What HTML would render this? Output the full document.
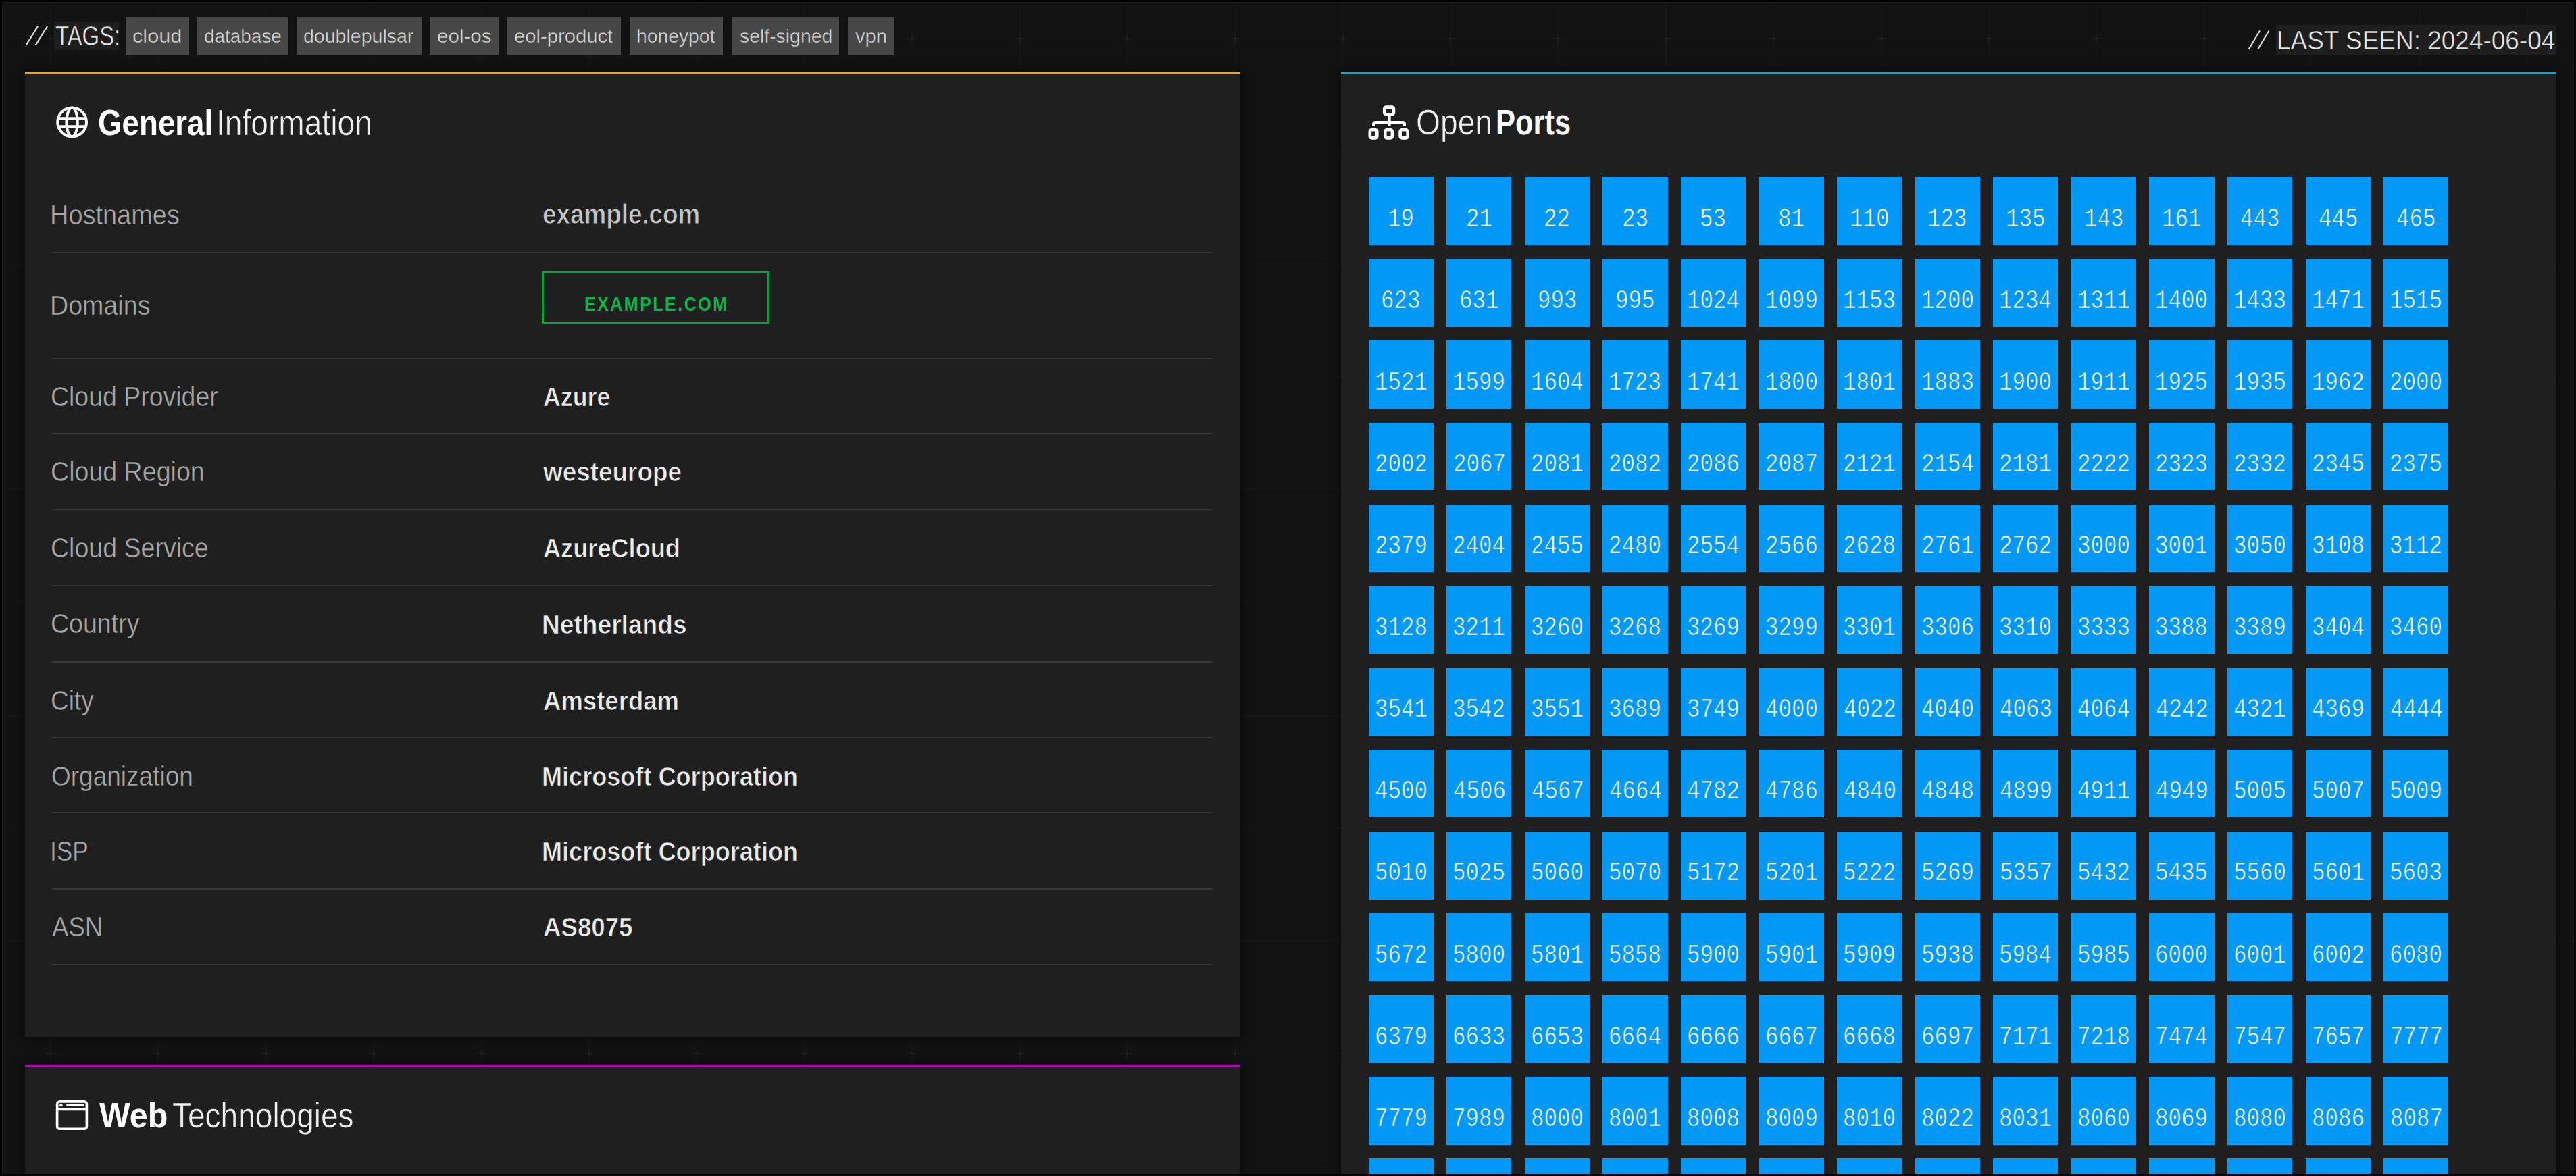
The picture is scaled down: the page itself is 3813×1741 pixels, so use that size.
<!DOCTYPE html>
<html><head><meta charset="utf-8"><style>
html,body{margin:0;padding:0;}
body{width:3813px;height:1741px;overflow:hidden;position:relative;background:#000;font-family:"Liberation Sans",sans-serif;}
#pg{position:absolute;left:3px;top:3px;width:3807px;height:1735px;background:#121212;overflow:hidden;}
#fr{position:absolute;left:3px;top:3px;width:3807px;height:1735px;box-shadow:inset 1px 1px 0 #1b1b1b;pointer-events:none;}
.b{position:absolute;}
.t{position:absolute;white-space:nowrap;transform-origin:0 0;}
</style></head><body><div id="pg"><div style="position:absolute;left:-3px;top:-3px;width:3813px;height:1741px;">
<svg class="b" style="left:0;top:0" width="3813" height="1741" viewBox="0 0 3813 1741">
<defs><pattern id="gp" patternUnits="userSpaceOnUse" x="-4.7" y="-26.5" width="159.4" height="167">
<g stroke="#ffffff" stroke-width="1.2" fill="none">
<line x1="79.7" y1="0" x2="79.7" y2="167" stroke-opacity="0.016"/>
<line x1="0" y1="83.5" x2="159.4" y2="83.5" stroke-opacity="0.016"/>
<line x1="73.7" y1="83.5" x2="85.7" y2="83.5" stroke-opacity="0.05"/>
<line x1="79.7" y1="77.5" x2="79.7" y2="89.5" stroke-opacity="0.05"/>
</g></pattern></defs>
<rect width="3813" height="1741" fill="url(#gp)"/></svg>
<div class="b" style="left:37.00px;top:107.00px;width:1798.00px;height:1427.50px;background:#1f1f1f;box-shadow:0 0 12px 2px rgba(0,0,0,.5);"></div>
<div class="b" style="left:37.00px;top:107.00px;width:1798.00px;height:3.00px;background:#ff9f00;"></div>
<div class="b" style="left:1985.00px;top:107.00px;width:1798.50px;height:1634.00px;background:#1f1f1f;box-shadow:0 0 12px 2px rgba(0,0,0,.5);"></div>
<div class="b" style="left:1985.00px;top:107.00px;width:1798.50px;height:3.00px;background:#00a8e0;"></div>
<div class="b" style="left:37.00px;top:1576.00px;width:1798.00px;height:165.00px;background:#1f1f1f;box-shadow:0 0 12px 2px rgba(0,0,0,.5);"></div>
<div class="b" style="left:37.00px;top:1576.00px;width:1798.00px;height:3.00px;background:#c000c0;"></div>
<div class="b" style="left:80.30px;top:31.60px;width:95.90px;height:42.60px;background:#1e1e1e;"></div>
<div class="b" style="left:185.50px;top:25.30px;width:94.10px;height:55.70px;background:#474747;"></div>
<div class="b" style="left:291.60px;top:25.30px;width:135.80px;height:55.70px;background:#474747;"></div>
<div class="b" style="left:438.90px;top:25.30px;width:185.30px;height:55.70px;background:#474747;"></div>
<div class="b" style="left:636.30px;top:25.30px;width:101.90px;height:55.70px;background:#474747;"></div>
<div class="b" style="left:750.60px;top:25.30px;width:168.70px;height:55.70px;background:#474747;"></div>
<div class="b" style="left:931.70px;top:25.30px;width:138.80px;height:55.70px;background:#474747;"></div>
<div class="b" style="left:1083.00px;top:25.30px;width:159.20px;height:55.70px;background:#474747;"></div>
<div class="b" style="left:1254.70px;top:25.30px;width:68.90px;height:55.70px;background:#474747;"></div>
<div class="b" style="left:3368.70px;top:37.10px;width:413.90px;height:43.70px;background:#1e1e1e;"></div>
<div class="b" style="left:76.50px;top:373.00px;width:1718.50px;height:2.00px;background:#363636;"></div>
<div class="b" style="left:76.50px;top:530.00px;width:1718.50px;height:2.00px;background:#363636;"></div>
<div class="b" style="left:76.50px;top:640.60px;width:1718.50px;height:2.00px;background:#363636;"></div>
<div class="b" style="left:76.50px;top:753.30px;width:1718.50px;height:2.00px;background:#363636;"></div>
<div class="b" style="left:76.50px;top:866.00px;width:1718.50px;height:2.00px;background:#363636;"></div>
<div class="b" style="left:76.50px;top:978.70px;width:1718.50px;height:2.00px;background:#363636;"></div>
<div class="b" style="left:76.50px;top:1091.30px;width:1718.50px;height:2.00px;background:#363636;"></div>
<div class="b" style="left:76.50px;top:1201.70px;width:1718.50px;height:2.00px;background:#363636;"></div>
<div class="b" style="left:76.50px;top:1314.70px;width:1718.50px;height:2.00px;background:#363636;"></div>
<div class="b" style="left:76.50px;top:1427.30px;width:1718.50px;height:2.00px;background:#363636;"></div>
<div class="b" style="left:801.70px;top:400.50px;width:337.30px;height:79.90px;border:3px solid #04a23e;box-sizing:border-box;"></div>
<div class="b" style="left:2025.70px;top:262.20px;width:96.20px;height:100.60px;background:#0299f6;"></div>
<div class="b" style="left:2141.27px;top:262.20px;width:96.20px;height:100.60px;background:#0299f6;"></div>
<div class="b" style="left:2256.84px;top:262.20px;width:96.20px;height:100.60px;background:#0299f6;"></div>
<div class="b" style="left:2372.41px;top:262.20px;width:96.20px;height:100.60px;background:#0299f6;"></div>
<div class="b" style="left:2487.98px;top:262.20px;width:96.20px;height:100.60px;background:#0299f6;"></div>
<div class="b" style="left:2603.55px;top:262.20px;width:96.20px;height:100.60px;background:#0299f6;"></div>
<div class="b" style="left:2719.12px;top:262.20px;width:96.20px;height:100.60px;background:#0299f6;"></div>
<div class="b" style="left:2834.69px;top:262.20px;width:96.20px;height:100.60px;background:#0299f6;"></div>
<div class="b" style="left:2950.26px;top:262.20px;width:96.20px;height:100.60px;background:#0299f6;"></div>
<div class="b" style="left:3065.83px;top:262.20px;width:96.20px;height:100.60px;background:#0299f6;"></div>
<div class="b" style="left:3181.40px;top:262.20px;width:96.20px;height:100.60px;background:#0299f6;"></div>
<div class="b" style="left:3296.97px;top:262.20px;width:96.20px;height:100.60px;background:#0299f6;"></div>
<div class="b" style="left:3412.54px;top:262.20px;width:96.20px;height:100.60px;background:#0299f6;"></div>
<div class="b" style="left:3528.11px;top:262.20px;width:96.20px;height:100.60px;background:#0299f6;"></div>
<div class="b" style="left:2025.70px;top:383.30px;width:96.20px;height:100.60px;background:#0299f6;"></div>
<div class="b" style="left:2141.27px;top:383.30px;width:96.20px;height:100.60px;background:#0299f6;"></div>
<div class="b" style="left:2256.84px;top:383.30px;width:96.20px;height:100.60px;background:#0299f6;"></div>
<div class="b" style="left:2372.41px;top:383.30px;width:96.20px;height:100.60px;background:#0299f6;"></div>
<div class="b" style="left:2487.98px;top:383.30px;width:96.20px;height:100.60px;background:#0299f6;"></div>
<div class="b" style="left:2603.55px;top:383.30px;width:96.20px;height:100.60px;background:#0299f6;"></div>
<div class="b" style="left:2719.12px;top:383.30px;width:96.20px;height:100.60px;background:#0299f6;"></div>
<div class="b" style="left:2834.69px;top:383.30px;width:96.20px;height:100.60px;background:#0299f6;"></div>
<div class="b" style="left:2950.26px;top:383.30px;width:96.20px;height:100.60px;background:#0299f6;"></div>
<div class="b" style="left:3065.83px;top:383.30px;width:96.20px;height:100.60px;background:#0299f6;"></div>
<div class="b" style="left:3181.40px;top:383.30px;width:96.20px;height:100.60px;background:#0299f6;"></div>
<div class="b" style="left:3296.97px;top:383.30px;width:96.20px;height:100.60px;background:#0299f6;"></div>
<div class="b" style="left:3412.54px;top:383.30px;width:96.20px;height:100.60px;background:#0299f6;"></div>
<div class="b" style="left:3528.11px;top:383.30px;width:96.20px;height:100.60px;background:#0299f6;"></div>
<div class="b" style="left:2025.70px;top:504.40px;width:96.20px;height:100.60px;background:#0299f6;"></div>
<div class="b" style="left:2141.27px;top:504.40px;width:96.20px;height:100.60px;background:#0299f6;"></div>
<div class="b" style="left:2256.84px;top:504.40px;width:96.20px;height:100.60px;background:#0299f6;"></div>
<div class="b" style="left:2372.41px;top:504.40px;width:96.20px;height:100.60px;background:#0299f6;"></div>
<div class="b" style="left:2487.98px;top:504.40px;width:96.20px;height:100.60px;background:#0299f6;"></div>
<div class="b" style="left:2603.55px;top:504.40px;width:96.20px;height:100.60px;background:#0299f6;"></div>
<div class="b" style="left:2719.12px;top:504.40px;width:96.20px;height:100.60px;background:#0299f6;"></div>
<div class="b" style="left:2834.69px;top:504.40px;width:96.20px;height:100.60px;background:#0299f6;"></div>
<div class="b" style="left:2950.26px;top:504.40px;width:96.20px;height:100.60px;background:#0299f6;"></div>
<div class="b" style="left:3065.83px;top:504.40px;width:96.20px;height:100.60px;background:#0299f6;"></div>
<div class="b" style="left:3181.40px;top:504.40px;width:96.20px;height:100.60px;background:#0299f6;"></div>
<div class="b" style="left:3296.97px;top:504.40px;width:96.20px;height:100.60px;background:#0299f6;"></div>
<div class="b" style="left:3412.54px;top:504.40px;width:96.20px;height:100.60px;background:#0299f6;"></div>
<div class="b" style="left:3528.11px;top:504.40px;width:96.20px;height:100.60px;background:#0299f6;"></div>
<div class="b" style="left:2025.70px;top:625.50px;width:96.20px;height:100.60px;background:#0299f6;"></div>
<div class="b" style="left:2141.27px;top:625.50px;width:96.20px;height:100.60px;background:#0299f6;"></div>
<div class="b" style="left:2256.84px;top:625.50px;width:96.20px;height:100.60px;background:#0299f6;"></div>
<div class="b" style="left:2372.41px;top:625.50px;width:96.20px;height:100.60px;background:#0299f6;"></div>
<div class="b" style="left:2487.98px;top:625.50px;width:96.20px;height:100.60px;background:#0299f6;"></div>
<div class="b" style="left:2603.55px;top:625.50px;width:96.20px;height:100.60px;background:#0299f6;"></div>
<div class="b" style="left:2719.12px;top:625.50px;width:96.20px;height:100.60px;background:#0299f6;"></div>
<div class="b" style="left:2834.69px;top:625.50px;width:96.20px;height:100.60px;background:#0299f6;"></div>
<div class="b" style="left:2950.26px;top:625.50px;width:96.20px;height:100.60px;background:#0299f6;"></div>
<div class="b" style="left:3065.83px;top:625.50px;width:96.20px;height:100.60px;background:#0299f6;"></div>
<div class="b" style="left:3181.40px;top:625.50px;width:96.20px;height:100.60px;background:#0299f6;"></div>
<div class="b" style="left:3296.97px;top:625.50px;width:96.20px;height:100.60px;background:#0299f6;"></div>
<div class="b" style="left:3412.54px;top:625.50px;width:96.20px;height:100.60px;background:#0299f6;"></div>
<div class="b" style="left:3528.11px;top:625.50px;width:96.20px;height:100.60px;background:#0299f6;"></div>
<div class="b" style="left:2025.70px;top:746.60px;width:96.20px;height:100.60px;background:#0299f6;"></div>
<div class="b" style="left:2141.27px;top:746.60px;width:96.20px;height:100.60px;background:#0299f6;"></div>
<div class="b" style="left:2256.84px;top:746.60px;width:96.20px;height:100.60px;background:#0299f6;"></div>
<div class="b" style="left:2372.41px;top:746.60px;width:96.20px;height:100.60px;background:#0299f6;"></div>
<div class="b" style="left:2487.98px;top:746.60px;width:96.20px;height:100.60px;background:#0299f6;"></div>
<div class="b" style="left:2603.55px;top:746.60px;width:96.20px;height:100.60px;background:#0299f6;"></div>
<div class="b" style="left:2719.12px;top:746.60px;width:96.20px;height:100.60px;background:#0299f6;"></div>
<div class="b" style="left:2834.69px;top:746.60px;width:96.20px;height:100.60px;background:#0299f6;"></div>
<div class="b" style="left:2950.26px;top:746.60px;width:96.20px;height:100.60px;background:#0299f6;"></div>
<div class="b" style="left:3065.83px;top:746.60px;width:96.20px;height:100.60px;background:#0299f6;"></div>
<div class="b" style="left:3181.40px;top:746.60px;width:96.20px;height:100.60px;background:#0299f6;"></div>
<div class="b" style="left:3296.97px;top:746.60px;width:96.20px;height:100.60px;background:#0299f6;"></div>
<div class="b" style="left:3412.54px;top:746.60px;width:96.20px;height:100.60px;background:#0299f6;"></div>
<div class="b" style="left:3528.11px;top:746.60px;width:96.20px;height:100.60px;background:#0299f6;"></div>
<div class="b" style="left:2025.70px;top:867.70px;width:96.20px;height:100.60px;background:#0299f6;"></div>
<div class="b" style="left:2141.27px;top:867.70px;width:96.20px;height:100.60px;background:#0299f6;"></div>
<div class="b" style="left:2256.84px;top:867.70px;width:96.20px;height:100.60px;background:#0299f6;"></div>
<div class="b" style="left:2372.41px;top:867.70px;width:96.20px;height:100.60px;background:#0299f6;"></div>
<div class="b" style="left:2487.98px;top:867.70px;width:96.20px;height:100.60px;background:#0299f6;"></div>
<div class="b" style="left:2603.55px;top:867.70px;width:96.20px;height:100.60px;background:#0299f6;"></div>
<div class="b" style="left:2719.12px;top:867.70px;width:96.20px;height:100.60px;background:#0299f6;"></div>
<div class="b" style="left:2834.69px;top:867.70px;width:96.20px;height:100.60px;background:#0299f6;"></div>
<div class="b" style="left:2950.26px;top:867.70px;width:96.20px;height:100.60px;background:#0299f6;"></div>
<div class="b" style="left:3065.83px;top:867.70px;width:96.20px;height:100.60px;background:#0299f6;"></div>
<div class="b" style="left:3181.40px;top:867.70px;width:96.20px;height:100.60px;background:#0299f6;"></div>
<div class="b" style="left:3296.97px;top:867.70px;width:96.20px;height:100.60px;background:#0299f6;"></div>
<div class="b" style="left:3412.54px;top:867.70px;width:96.20px;height:100.60px;background:#0299f6;"></div>
<div class="b" style="left:3528.11px;top:867.70px;width:96.20px;height:100.60px;background:#0299f6;"></div>
<div class="b" style="left:2025.70px;top:988.80px;width:96.20px;height:100.60px;background:#0299f6;"></div>
<div class="b" style="left:2141.27px;top:988.80px;width:96.20px;height:100.60px;background:#0299f6;"></div>
<div class="b" style="left:2256.84px;top:988.80px;width:96.20px;height:100.60px;background:#0299f6;"></div>
<div class="b" style="left:2372.41px;top:988.80px;width:96.20px;height:100.60px;background:#0299f6;"></div>
<div class="b" style="left:2487.98px;top:988.80px;width:96.20px;height:100.60px;background:#0299f6;"></div>
<div class="b" style="left:2603.55px;top:988.80px;width:96.20px;height:100.60px;background:#0299f6;"></div>
<div class="b" style="left:2719.12px;top:988.80px;width:96.20px;height:100.60px;background:#0299f6;"></div>
<div class="b" style="left:2834.69px;top:988.80px;width:96.20px;height:100.60px;background:#0299f6;"></div>
<div class="b" style="left:2950.26px;top:988.80px;width:96.20px;height:100.60px;background:#0299f6;"></div>
<div class="b" style="left:3065.83px;top:988.80px;width:96.20px;height:100.60px;background:#0299f6;"></div>
<div class="b" style="left:3181.40px;top:988.80px;width:96.20px;height:100.60px;background:#0299f6;"></div>
<div class="b" style="left:3296.97px;top:988.80px;width:96.20px;height:100.60px;background:#0299f6;"></div>
<div class="b" style="left:3412.54px;top:988.80px;width:96.20px;height:100.60px;background:#0299f6;"></div>
<div class="b" style="left:3528.11px;top:988.80px;width:96.20px;height:100.60px;background:#0299f6;"></div>
<div class="b" style="left:2025.70px;top:1109.90px;width:96.20px;height:100.60px;background:#0299f6;"></div>
<div class="b" style="left:2141.27px;top:1109.90px;width:96.20px;height:100.60px;background:#0299f6;"></div>
<div class="b" style="left:2256.84px;top:1109.90px;width:96.20px;height:100.60px;background:#0299f6;"></div>
<div class="b" style="left:2372.41px;top:1109.90px;width:96.20px;height:100.60px;background:#0299f6;"></div>
<div class="b" style="left:2487.98px;top:1109.90px;width:96.20px;height:100.60px;background:#0299f6;"></div>
<div class="b" style="left:2603.55px;top:1109.90px;width:96.20px;height:100.60px;background:#0299f6;"></div>
<div class="b" style="left:2719.12px;top:1109.90px;width:96.20px;height:100.60px;background:#0299f6;"></div>
<div class="b" style="left:2834.69px;top:1109.90px;width:96.20px;height:100.60px;background:#0299f6;"></div>
<div class="b" style="left:2950.26px;top:1109.90px;width:96.20px;height:100.60px;background:#0299f6;"></div>
<div class="b" style="left:3065.83px;top:1109.90px;width:96.20px;height:100.60px;background:#0299f6;"></div>
<div class="b" style="left:3181.40px;top:1109.90px;width:96.20px;height:100.60px;background:#0299f6;"></div>
<div class="b" style="left:3296.97px;top:1109.90px;width:96.20px;height:100.60px;background:#0299f6;"></div>
<div class="b" style="left:3412.54px;top:1109.90px;width:96.20px;height:100.60px;background:#0299f6;"></div>
<div class="b" style="left:3528.11px;top:1109.90px;width:96.20px;height:100.60px;background:#0299f6;"></div>
<div class="b" style="left:2025.70px;top:1231.00px;width:96.20px;height:100.60px;background:#0299f6;"></div>
<div class="b" style="left:2141.27px;top:1231.00px;width:96.20px;height:100.60px;background:#0299f6;"></div>
<div class="b" style="left:2256.84px;top:1231.00px;width:96.20px;height:100.60px;background:#0299f6;"></div>
<div class="b" style="left:2372.41px;top:1231.00px;width:96.20px;height:100.60px;background:#0299f6;"></div>
<div class="b" style="left:2487.98px;top:1231.00px;width:96.20px;height:100.60px;background:#0299f6;"></div>
<div class="b" style="left:2603.55px;top:1231.00px;width:96.20px;height:100.60px;background:#0299f6;"></div>
<div class="b" style="left:2719.12px;top:1231.00px;width:96.20px;height:100.60px;background:#0299f6;"></div>
<div class="b" style="left:2834.69px;top:1231.00px;width:96.20px;height:100.60px;background:#0299f6;"></div>
<div class="b" style="left:2950.26px;top:1231.00px;width:96.20px;height:100.60px;background:#0299f6;"></div>
<div class="b" style="left:3065.83px;top:1231.00px;width:96.20px;height:100.60px;background:#0299f6;"></div>
<div class="b" style="left:3181.40px;top:1231.00px;width:96.20px;height:100.60px;background:#0299f6;"></div>
<div class="b" style="left:3296.97px;top:1231.00px;width:96.20px;height:100.60px;background:#0299f6;"></div>
<div class="b" style="left:3412.54px;top:1231.00px;width:96.20px;height:100.60px;background:#0299f6;"></div>
<div class="b" style="left:3528.11px;top:1231.00px;width:96.20px;height:100.60px;background:#0299f6;"></div>
<div class="b" style="left:2025.70px;top:1352.10px;width:96.20px;height:100.60px;background:#0299f6;"></div>
<div class="b" style="left:2141.27px;top:1352.10px;width:96.20px;height:100.60px;background:#0299f6;"></div>
<div class="b" style="left:2256.84px;top:1352.10px;width:96.20px;height:100.60px;background:#0299f6;"></div>
<div class="b" style="left:2372.41px;top:1352.10px;width:96.20px;height:100.60px;background:#0299f6;"></div>
<div class="b" style="left:2487.98px;top:1352.10px;width:96.20px;height:100.60px;background:#0299f6;"></div>
<div class="b" style="left:2603.55px;top:1352.10px;width:96.20px;height:100.60px;background:#0299f6;"></div>
<div class="b" style="left:2719.12px;top:1352.10px;width:96.20px;height:100.60px;background:#0299f6;"></div>
<div class="b" style="left:2834.69px;top:1352.10px;width:96.20px;height:100.60px;background:#0299f6;"></div>
<div class="b" style="left:2950.26px;top:1352.10px;width:96.20px;height:100.60px;background:#0299f6;"></div>
<div class="b" style="left:3065.83px;top:1352.10px;width:96.20px;height:100.60px;background:#0299f6;"></div>
<div class="b" style="left:3181.40px;top:1352.10px;width:96.20px;height:100.60px;background:#0299f6;"></div>
<div class="b" style="left:3296.97px;top:1352.10px;width:96.20px;height:100.60px;background:#0299f6;"></div>
<div class="b" style="left:3412.54px;top:1352.10px;width:96.20px;height:100.60px;background:#0299f6;"></div>
<div class="b" style="left:3528.11px;top:1352.10px;width:96.20px;height:100.60px;background:#0299f6;"></div>
<div class="b" style="left:2025.70px;top:1473.20px;width:96.20px;height:100.60px;background:#0299f6;"></div>
<div class="b" style="left:2141.27px;top:1473.20px;width:96.20px;height:100.60px;background:#0299f6;"></div>
<div class="b" style="left:2256.84px;top:1473.20px;width:96.20px;height:100.60px;background:#0299f6;"></div>
<div class="b" style="left:2372.41px;top:1473.20px;width:96.20px;height:100.60px;background:#0299f6;"></div>
<div class="b" style="left:2487.98px;top:1473.20px;width:96.20px;height:100.60px;background:#0299f6;"></div>
<div class="b" style="left:2603.55px;top:1473.20px;width:96.20px;height:100.60px;background:#0299f6;"></div>
<div class="b" style="left:2719.12px;top:1473.20px;width:96.20px;height:100.60px;background:#0299f6;"></div>
<div class="b" style="left:2834.69px;top:1473.20px;width:96.20px;height:100.60px;background:#0299f6;"></div>
<div class="b" style="left:2950.26px;top:1473.20px;width:96.20px;height:100.60px;background:#0299f6;"></div>
<div class="b" style="left:3065.83px;top:1473.20px;width:96.20px;height:100.60px;background:#0299f6;"></div>
<div class="b" style="left:3181.40px;top:1473.20px;width:96.20px;height:100.60px;background:#0299f6;"></div>
<div class="b" style="left:3296.97px;top:1473.20px;width:96.20px;height:100.60px;background:#0299f6;"></div>
<div class="b" style="left:3412.54px;top:1473.20px;width:96.20px;height:100.60px;background:#0299f6;"></div>
<div class="b" style="left:3528.11px;top:1473.20px;width:96.20px;height:100.60px;background:#0299f6;"></div>
<div class="b" style="left:2025.70px;top:1594.30px;width:96.20px;height:100.60px;background:#0299f6;"></div>
<div class="b" style="left:2141.27px;top:1594.30px;width:96.20px;height:100.60px;background:#0299f6;"></div>
<div class="b" style="left:2256.84px;top:1594.30px;width:96.20px;height:100.60px;background:#0299f6;"></div>
<div class="b" style="left:2372.41px;top:1594.30px;width:96.20px;height:100.60px;background:#0299f6;"></div>
<div class="b" style="left:2487.98px;top:1594.30px;width:96.20px;height:100.60px;background:#0299f6;"></div>
<div class="b" style="left:2603.55px;top:1594.30px;width:96.20px;height:100.60px;background:#0299f6;"></div>
<div class="b" style="left:2719.12px;top:1594.30px;width:96.20px;height:100.60px;background:#0299f6;"></div>
<div class="b" style="left:2834.69px;top:1594.30px;width:96.20px;height:100.60px;background:#0299f6;"></div>
<div class="b" style="left:2950.26px;top:1594.30px;width:96.20px;height:100.60px;background:#0299f6;"></div>
<div class="b" style="left:3065.83px;top:1594.30px;width:96.20px;height:100.60px;background:#0299f6;"></div>
<div class="b" style="left:3181.40px;top:1594.30px;width:96.20px;height:100.60px;background:#0299f6;"></div>
<div class="b" style="left:3296.97px;top:1594.30px;width:96.20px;height:100.60px;background:#0299f6;"></div>
<div class="b" style="left:3412.54px;top:1594.30px;width:96.20px;height:100.60px;background:#0299f6;"></div>
<div class="b" style="left:3528.11px;top:1594.30px;width:96.20px;height:100.60px;background:#0299f6;"></div>
<div class="b" style="left:2025.70px;top:1715.40px;width:96.20px;height:100.60px;background:#0299f6;"></div>
<div class="b" style="left:2141.27px;top:1715.40px;width:96.20px;height:100.60px;background:#0299f6;"></div>
<div class="b" style="left:2256.84px;top:1715.40px;width:96.20px;height:100.60px;background:#0299f6;"></div>
<div class="b" style="left:2372.41px;top:1715.40px;width:96.20px;height:100.60px;background:#0299f6;"></div>
<div class="b" style="left:2487.98px;top:1715.40px;width:96.20px;height:100.60px;background:#0299f6;"></div>
<div class="b" style="left:2603.55px;top:1715.40px;width:96.20px;height:100.60px;background:#0299f6;"></div>
<div class="b" style="left:2719.12px;top:1715.40px;width:96.20px;height:100.60px;background:#0299f6;"></div>
<div class="b" style="left:2834.69px;top:1715.40px;width:96.20px;height:100.60px;background:#0299f6;"></div>
<div class="b" style="left:2950.26px;top:1715.40px;width:96.20px;height:100.60px;background:#0299f6;"></div>
<div class="b" style="left:3065.83px;top:1715.40px;width:96.20px;height:100.60px;background:#0299f6;"></div>
<div class="b" style="left:3181.40px;top:1715.40px;width:96.20px;height:100.60px;background:#0299f6;"></div>
<div class="b" style="left:3296.97px;top:1715.40px;width:96.20px;height:100.60px;background:#0299f6;"></div>
<div class="b" style="left:3412.54px;top:1715.40px;width:96.20px;height:100.60px;background:#0299f6;"></div>
<div class="b" style="left:3528.11px;top:1715.40px;width:96.20px;height:100.60px;background:#0299f6;"></div>
<svg class="b" style="left:0;top:0" width="3813" height="100" viewBox="0 0 3813 100">
<g stroke="#d6d6d6" stroke-width="2.3" stroke-linecap="butt">
<line x1="38.5" y1="67" x2="56" y2="39"/><line x1="52.5" y1="67" x2="70" y2="39"/>
<line x1="3328.5" y1="73" x2="3345" y2="45.5"/><line x1="3342" y1="73" x2="3358.5" y2="45.5"/>
</g></svg>
<svg class="b" style="left:81px;top:155px" width="51" height="52" viewBox="0 0 51 52">
<g fill="none" stroke="#fff" stroke-width="4">
<circle cx="25.6" cy="25.9" r="21.4"/>
<ellipse cx="25.6" cy="25.9" rx="8.2" ry="21.4"/>
<line x1="5" y1="20.2" x2="46" y2="20.2"/>
<line x1="5" y1="32.2" x2="46" y2="32.2"/>
</g></svg>
<svg class="b" style="left:2024px;top:155px" width="64" height="54" viewBox="0 0 64 54">
<g fill="none" stroke="#fff" stroke-width="4.6">
<rect x="25.2" y="3.6" width="13.8" height="10.7" rx="2.5"/>
<rect x="3.8" y="37.3" width="10.5" height="12.1" rx="2.5"/>
<rect x="26.3" y="37.3" width="10.6" height="12.1" rx="2.5"/>
<rect x="48.6" y="37.3" width="11" height="12.1" rx="2.5"/>
<path d="M32.35 14.3 V31.9 M9.3 31.9 V29.2 q0-3 3-3 H51.8 q3 0 3 3 V31.9"/>
</g></svg>
<svg class="b" style="left:81px;top:1627px" width="51" height="48" viewBox="0 0 51 48">
<g fill="none" stroke="#fff" stroke-width="3.6">
<rect x="3.6" y="3.9" width="43.8" height="40.3" rx="3.5"/>
<line x1="3.6" y1="15.4" x2="47.4" y2="15.4"/>
<line x1="17.3" y1="9.2" x2="43.7" y2="9.2"/>
</g><circle cx="9.4" cy="9.2" r="2.2" fill="#fff"/></svg>
<span class="t" style="left:81.50px;top:32.67px;font-size:41.13px;line-height:41.13px;color:#e6e6e6;-webkit-text-stroke:0.5px #1e1e1e;transform:scaleX(0.7997);">TAGS:</span>
<span class="t" style="left:195.86px;top:41.14px;font-size:27.00px;line-height:27.00px;color:#d4d4d4;-webkit-text-stroke:0.35px #474747;transform:scaleX(1.1370);">cloud</span>
<span class="t" style="left:302.07px;top:41.14px;font-size:27.00px;line-height:27.00px;color:#d4d4d4;-webkit-text-stroke:0.35px #474747;transform:scaleX(1.0341);">database</span>
<span class="t" style="left:449.34px;top:41.14px;font-size:27.00px;line-height:27.00px;color:#d4d4d4;-webkit-text-stroke:0.35px #474747;transform:scaleX(1.0565);">doublepulsar</span>
<span class="t" style="left:646.70px;top:41.14px;font-size:27.00px;line-height:27.00px;color:#d4d4d4;-webkit-text-stroke:0.35px #474747;transform:scaleX(1.0953);">eol-os</span>
<span class="t" style="left:761.02px;top:41.14px;font-size:27.00px;line-height:27.00px;color:#d4d4d4;-webkit-text-stroke:0.35px #474747;transform:scaleX(1.0826);">eol-product</span>
<span class="t" style="left:942.15px;top:41.14px;font-size:27.00px;line-height:27.00px;color:#d4d4d4;-webkit-text-stroke:0.35px #474747;transform:scaleX(1.0470);">honeypot</span>
<span class="t" style="left:1094.50px;top:41.14px;font-size:27.00px;line-height:27.00px;color:#d4d4d4;-webkit-text-stroke:0.35px #474747;transform:scaleX(1.0513);">self-signed</span>
<span class="t" style="left:1266.20px;top:41.14px;font-size:27.00px;line-height:27.00px;color:#d4d4d4;-webkit-text-stroke:0.35px #474747;transform:scaleX(1.0796);">vpn</span>
<span class="t" style="left:3369.79px;top:39.63px;font-size:39.54px;line-height:39.54px;color:#e6e6e6;-webkit-text-stroke:0.5px #1e1e1e;transform:scaleX(0.9350);">LAST SEEN: 2024-06-04</span>
<span class="t" style="left:145.30px;top:155.27px;font-size:53.78px;line-height:53.78px;color:#ffffff;font-weight:700;transform:scaleX(0.8500);">General</span>
<span class="t" style="left:319.57px;top:155.27px;font-size:53.78px;line-height:53.78px;color:#f0f0f0;-webkit-text-stroke:0.6px #1f1f1f;transform:scaleX(0.8586);">Information</span>
<span class="t" style="left:74.17px;top:299.11px;font-size:40.26px;line-height:40.26px;color:#a6a6a6;-webkit-text-stroke:0.4px #1f1f1f;transform:scaleX(0.9426);">Hostnames</span>
<span class="t" style="left:74.20px;top:432.91px;font-size:40.26px;line-height:40.26px;color:#a6a6a6;-webkit-text-stroke:0.4px #1f1f1f;transform:scaleX(0.9348);">Domains</span>
<span class="t" style="left:75.14px;top:567.91px;font-size:40.26px;line-height:40.26px;color:#a6a6a6;-webkit-text-stroke:0.4px #1f1f1f;transform:scaleX(0.9306);">Cloud Provider</span>
<span class="t" style="left:75.13px;top:678.91px;font-size:40.26px;line-height:40.26px;color:#a6a6a6;-webkit-text-stroke:0.4px #1f1f1f;transform:scaleX(0.9336);">Cloud Region</span>
<span class="t" style="left:75.13px;top:791.71px;font-size:40.26px;line-height:40.26px;color:#a6a6a6;-webkit-text-stroke:0.4px #1f1f1f;transform:scaleX(0.9329);">Cloud Service</span>
<span class="t" style="left:75.13px;top:904.41px;font-size:40.26px;line-height:40.26px;color:#a6a6a6;-webkit-text-stroke:0.4px #1f1f1f;transform:scaleX(0.9327);">Country</span>
<span class="t" style="left:75.16px;top:1017.61px;font-size:40.26px;line-height:40.26px;color:#a6a6a6;-webkit-text-stroke:0.4px #1f1f1f;transform:scaleX(0.9180);">City</span>
<span class="t" style="left:76.08px;top:1129.71px;font-size:40.26px;line-height:40.26px;color:#a6a6a6;-webkit-text-stroke:0.4px #1f1f1f;transform:scaleX(0.9194);">Organization</span>
<span class="t" style="left:74.37px;top:1241.21px;font-size:40.26px;line-height:40.26px;color:#a6a6a6;-webkit-text-stroke:0.4px #1f1f1f;transform:scaleX(0.8762);">ISP</span>
<span class="t" style="left:77.00px;top:1353.11px;font-size:40.26px;line-height:40.26px;color:#a6a6a6;-webkit-text-stroke:0.4px #1f1f1f;transform:scaleX(0.9097);">ASN</span>
<span class="t" style="left:803.50px;top:569.02px;font-size:38.95px;line-height:38.95px;color:#ececec;font-weight:700;-webkit-text-stroke:0.7px #1f1f1f;transform:scaleX(0.9179);">Azure</span>
<span class="t" style="left:804.45px;top:680.02px;font-size:38.95px;line-height:38.95px;color:#ececec;font-weight:700;-webkit-text-stroke:0.7px #1f1f1f;transform:scaleX(0.9473);">westeurope</span>
<span class="t" style="left:803.50px;top:792.82px;font-size:38.95px;line-height:38.95px;color:#ececec;font-weight:700;-webkit-text-stroke:0.7px #1f1f1f;transform:scaleX(0.9290);">AzureCloud</span>
<span class="t" style="left:801.59px;top:905.52px;font-size:38.95px;line-height:38.95px;color:#ececec;font-weight:700;-webkit-text-stroke:0.7px #1f1f1f;transform:scaleX(0.9533);">Netherlands</span>
<span class="t" style="left:803.50px;top:1018.72px;font-size:38.95px;line-height:38.95px;color:#ececec;font-weight:700;-webkit-text-stroke:0.7px #1f1f1f;transform:scaleX(0.9383);">Amsterdam</span>
<span class="t" style="left:801.65px;top:1130.82px;font-size:38.95px;line-height:38.95px;color:#ececec;font-weight:700;-webkit-text-stroke:0.7px #1f1f1f;transform:scaleX(0.9271);">Microsoft Corporation</span>
<span class="t" style="left:801.65px;top:1242.32px;font-size:38.95px;line-height:38.95px;color:#ececec;font-weight:700;-webkit-text-stroke:0.7px #1f1f1f;transform:scaleX(0.9271);">Microsoft Corporation</span>
<span class="t" style="left:803.50px;top:1354.22px;font-size:38.95px;line-height:38.95px;color:#ececec;font-weight:700;-webkit-text-stroke:0.7px #1f1f1f;transform:scaleX(0.9411);">AS8075</span>
<span class="t" style="left:802.60px;top:297.09px;font-size:41.00px;line-height:41.00px;color:#c4c4c4;font-weight:700;-webkit-text-stroke:0.8px #1f1f1f;transform:scaleX(0.8980);">example.com</span>
<span class="t" style="left:865.35px;top:435.04px;font-size:29.36px;line-height:29.36px;color:#06b84a;font-weight:700;letter-spacing:3px;transform:scaleX(0.8484);">EXAMPLE.COM</span>
<span class="t" style="left:146.60px;top:1624.85px;font-size:52.62px;line-height:52.62px;color:#ffffff;font-weight:700;transform:scaleX(0.9207);">Web</span>
<span class="t" style="left:255.13px;top:1624.85px;font-size:52.62px;line-height:52.62px;color:#f0f0f0;-webkit-text-stroke:0.6px #1f1f1f;transform:scaleX(0.8747);">Technologies</span>
<span class="t" style="left:2095.52px;top:156.37px;font-size:51.89px;line-height:51.89px;color:#f0f0f0;-webkit-text-stroke:0.6px #1f1f1f;transform:scaleX(0.8906);">Open</span>
<span class="t" style="left:2214.49px;top:156.37px;font-size:51.89px;line-height:51.89px;color:#ffffff;font-weight:700;transform:scaleX(0.8376);">Ports</span>
<span class="t" style="left:2054.20px;top:305.61px;font-size:37.97px;line-height:37.97px;color:#ffffff;font-family:'Liberation Mono',monospace;-webkit-text-stroke:0.7px #0299f6;transform:scaleX(0.8560);">19</span>
<span class="t" style="left:2169.77px;top:305.61px;font-size:37.97px;line-height:37.97px;color:#ffffff;font-family:'Liberation Mono',monospace;-webkit-text-stroke:0.7px #0299f6;transform:scaleX(0.8560);">21</span>
<span class="t" style="left:2285.34px;top:305.61px;font-size:37.97px;line-height:37.97px;color:#ffffff;font-family:'Liberation Mono',monospace;-webkit-text-stroke:0.7px #0299f6;transform:scaleX(0.8560);">22</span>
<span class="t" style="left:2400.91px;top:305.61px;font-size:37.97px;line-height:37.97px;color:#ffffff;font-family:'Liberation Mono',monospace;-webkit-text-stroke:0.7px #0299f6;transform:scaleX(0.8560);">23</span>
<span class="t" style="left:2516.48px;top:305.61px;font-size:37.97px;line-height:37.97px;color:#ffffff;font-family:'Liberation Mono',monospace;-webkit-text-stroke:0.7px #0299f6;transform:scaleX(0.8560);">53</span>
<span class="t" style="left:2632.05px;top:305.61px;font-size:37.97px;line-height:37.97px;color:#ffffff;font-family:'Liberation Mono',monospace;-webkit-text-stroke:0.7px #0299f6;transform:scaleX(0.8560);">81</span>
<span class="t" style="left:2737.87px;top:305.61px;font-size:37.97px;line-height:37.97px;color:#ffffff;font-family:'Liberation Mono',monospace;-webkit-text-stroke:0.7px #0299f6;transform:scaleX(0.8560);">110</span>
<span class="t" style="left:2853.44px;top:305.61px;font-size:37.97px;line-height:37.97px;color:#ffffff;font-family:'Liberation Mono',monospace;-webkit-text-stroke:0.7px #0299f6;transform:scaleX(0.8560);">123</span>
<span class="t" style="left:2969.01px;top:305.61px;font-size:37.97px;line-height:37.97px;color:#ffffff;font-family:'Liberation Mono',monospace;-webkit-text-stroke:0.7px #0299f6;transform:scaleX(0.8560);">135</span>
<span class="t" style="left:3084.58px;top:305.61px;font-size:37.97px;line-height:37.97px;color:#ffffff;font-family:'Liberation Mono',monospace;-webkit-text-stroke:0.7px #0299f6;transform:scaleX(0.8560);">143</span>
<span class="t" style="left:3200.15px;top:305.61px;font-size:37.97px;line-height:37.97px;color:#ffffff;font-family:'Liberation Mono',monospace;-webkit-text-stroke:0.7px #0299f6;transform:scaleX(0.8560);">161</span>
<span class="t" style="left:3316.15px;top:305.61px;font-size:37.97px;line-height:37.97px;color:#ffffff;font-family:'Liberation Mono',monospace;-webkit-text-stroke:0.7px #0299f6;transform:scaleX(0.8560);">443</span>
<span class="t" style="left:3431.72px;top:305.61px;font-size:37.97px;line-height:37.97px;color:#ffffff;font-family:'Liberation Mono',monospace;-webkit-text-stroke:0.7px #0299f6;transform:scaleX(0.8560);">445</span>
<span class="t" style="left:3547.29px;top:305.61px;font-size:37.97px;line-height:37.97px;color:#ffffff;font-family:'Liberation Mono',monospace;-webkit-text-stroke:0.7px #0299f6;transform:scaleX(0.8560);">465</span>
<span class="t" style="left:2044.45px;top:426.71px;font-size:37.97px;line-height:37.97px;color:#ffffff;font-family:'Liberation Mono',monospace;-webkit-text-stroke:0.7px #0299f6;transform:scaleX(0.8560);">623</span>
<span class="t" style="left:2160.02px;top:426.71px;font-size:37.97px;line-height:37.97px;color:#ffffff;font-family:'Liberation Mono',monospace;-webkit-text-stroke:0.7px #0299f6;transform:scaleX(0.8560);">631</span>
<span class="t" style="left:2275.59px;top:426.71px;font-size:37.97px;line-height:37.97px;color:#ffffff;font-family:'Liberation Mono',monospace;-webkit-text-stroke:0.7px #0299f6;transform:scaleX(0.8560);">993</span>
<span class="t" style="left:2391.16px;top:426.71px;font-size:37.97px;line-height:37.97px;color:#ffffff;font-family:'Liberation Mono',monospace;-webkit-text-stroke:0.7px #0299f6;transform:scaleX(0.8560);">995</span>
<span class="t" style="left:2496.98px;top:426.71px;font-size:37.97px;line-height:37.97px;color:#ffffff;font-family:'Liberation Mono',monospace;-webkit-text-stroke:0.7px #0299f6;transform:scaleX(0.8560);">1024</span>
<span class="t" style="left:2612.55px;top:426.71px;font-size:37.97px;line-height:37.97px;color:#ffffff;font-family:'Liberation Mono',monospace;-webkit-text-stroke:0.7px #0299f6;transform:scaleX(0.8560);">1099</span>
<span class="t" style="left:2728.12px;top:426.71px;font-size:37.97px;line-height:37.97px;color:#ffffff;font-family:'Liberation Mono',monospace;-webkit-text-stroke:0.7px #0299f6;transform:scaleX(0.8560);">1153</span>
<span class="t" style="left:2843.69px;top:426.71px;font-size:37.97px;line-height:37.97px;color:#ffffff;font-family:'Liberation Mono',monospace;-webkit-text-stroke:0.7px #0299f6;transform:scaleX(0.8560);">1200</span>
<span class="t" style="left:2959.26px;top:426.71px;font-size:37.97px;line-height:37.97px;color:#ffffff;font-family:'Liberation Mono',monospace;-webkit-text-stroke:0.7px #0299f6;transform:scaleX(0.8560);">1234</span>
<span class="t" style="left:3074.83px;top:426.71px;font-size:37.97px;line-height:37.97px;color:#ffffff;font-family:'Liberation Mono',monospace;-webkit-text-stroke:0.7px #0299f6;transform:scaleX(0.8560);">1311</span>
<span class="t" style="left:3190.40px;top:426.71px;font-size:37.97px;line-height:37.97px;color:#ffffff;font-family:'Liberation Mono',monospace;-webkit-text-stroke:0.7px #0299f6;transform:scaleX(0.8560);">1400</span>
<span class="t" style="left:3305.97px;top:426.71px;font-size:37.97px;line-height:37.97px;color:#ffffff;font-family:'Liberation Mono',monospace;-webkit-text-stroke:0.7px #0299f6;transform:scaleX(0.8560);">1433</span>
<span class="t" style="left:3421.54px;top:426.71px;font-size:37.97px;line-height:37.97px;color:#ffffff;font-family:'Liberation Mono',monospace;-webkit-text-stroke:0.7px #0299f6;transform:scaleX(0.8560);">1471</span>
<span class="t" style="left:3537.11px;top:426.71px;font-size:37.97px;line-height:37.97px;color:#ffffff;font-family:'Liberation Mono',monospace;-webkit-text-stroke:0.7px #0299f6;transform:scaleX(0.8560);">1515</span>
<span class="t" style="left:2034.70px;top:547.81px;font-size:37.97px;line-height:37.97px;color:#ffffff;font-family:'Liberation Mono',monospace;-webkit-text-stroke:0.7px #0299f6;transform:scaleX(0.8560);">1521</span>
<span class="t" style="left:2150.27px;top:547.81px;font-size:37.97px;line-height:37.97px;color:#ffffff;font-family:'Liberation Mono',monospace;-webkit-text-stroke:0.7px #0299f6;transform:scaleX(0.8560);">1599</span>
<span class="t" style="left:2265.84px;top:547.81px;font-size:37.97px;line-height:37.97px;color:#ffffff;font-family:'Liberation Mono',monospace;-webkit-text-stroke:0.7px #0299f6;transform:scaleX(0.8560);">1604</span>
<span class="t" style="left:2381.41px;top:547.81px;font-size:37.97px;line-height:37.97px;color:#ffffff;font-family:'Liberation Mono',monospace;-webkit-text-stroke:0.7px #0299f6;transform:scaleX(0.8560);">1723</span>
<span class="t" style="left:2496.98px;top:547.81px;font-size:37.97px;line-height:37.97px;color:#ffffff;font-family:'Liberation Mono',monospace;-webkit-text-stroke:0.7px #0299f6;transform:scaleX(0.8560);">1741</span>
<span class="t" style="left:2612.55px;top:547.81px;font-size:37.97px;line-height:37.97px;color:#ffffff;font-family:'Liberation Mono',monospace;-webkit-text-stroke:0.7px #0299f6;transform:scaleX(0.8560);">1800</span>
<span class="t" style="left:2728.12px;top:547.81px;font-size:37.97px;line-height:37.97px;color:#ffffff;font-family:'Liberation Mono',monospace;-webkit-text-stroke:0.7px #0299f6;transform:scaleX(0.8560);">1801</span>
<span class="t" style="left:2843.69px;top:547.81px;font-size:37.97px;line-height:37.97px;color:#ffffff;font-family:'Liberation Mono',monospace;-webkit-text-stroke:0.7px #0299f6;transform:scaleX(0.8560);">1883</span>
<span class="t" style="left:2959.26px;top:547.81px;font-size:37.97px;line-height:37.97px;color:#ffffff;font-family:'Liberation Mono',monospace;-webkit-text-stroke:0.7px #0299f6;transform:scaleX(0.8560);">1900</span>
<span class="t" style="left:3074.83px;top:547.81px;font-size:37.97px;line-height:37.97px;color:#ffffff;font-family:'Liberation Mono',monospace;-webkit-text-stroke:0.7px #0299f6;transform:scaleX(0.8560);">1911</span>
<span class="t" style="left:3190.40px;top:547.81px;font-size:37.97px;line-height:37.97px;color:#ffffff;font-family:'Liberation Mono',monospace;-webkit-text-stroke:0.7px #0299f6;transform:scaleX(0.8560);">1925</span>
<span class="t" style="left:3305.97px;top:547.81px;font-size:37.97px;line-height:37.97px;color:#ffffff;font-family:'Liberation Mono',monospace;-webkit-text-stroke:0.7px #0299f6;transform:scaleX(0.8560);">1935</span>
<span class="t" style="left:3421.54px;top:547.81px;font-size:37.97px;line-height:37.97px;color:#ffffff;font-family:'Liberation Mono',monospace;-webkit-text-stroke:0.7px #0299f6;transform:scaleX(0.8560);">1962</span>
<span class="t" style="left:3537.11px;top:547.81px;font-size:37.97px;line-height:37.97px;color:#ffffff;font-family:'Liberation Mono',monospace;-webkit-text-stroke:0.7px #0299f6;transform:scaleX(0.8560);">2000</span>
<span class="t" style="left:2034.70px;top:668.91px;font-size:37.97px;line-height:37.97px;color:#ffffff;font-family:'Liberation Mono',monospace;-webkit-text-stroke:0.7px #0299f6;transform:scaleX(0.8560);">2002</span>
<span class="t" style="left:2150.70px;top:668.91px;font-size:37.97px;line-height:37.97px;color:#ffffff;font-family:'Liberation Mono',monospace;-webkit-text-stroke:0.7px #0299f6;transform:scaleX(0.8560);">2067</span>
<span class="t" style="left:2265.84px;top:668.91px;font-size:37.97px;line-height:37.97px;color:#ffffff;font-family:'Liberation Mono',monospace;-webkit-text-stroke:0.7px #0299f6;transform:scaleX(0.8560);">2081</span>
<span class="t" style="left:2381.41px;top:668.91px;font-size:37.97px;line-height:37.97px;color:#ffffff;font-family:'Liberation Mono',monospace;-webkit-text-stroke:0.7px #0299f6;transform:scaleX(0.8560);">2082</span>
<span class="t" style="left:2496.98px;top:668.91px;font-size:37.97px;line-height:37.97px;color:#ffffff;font-family:'Liberation Mono',monospace;-webkit-text-stroke:0.7px #0299f6;transform:scaleX(0.8560);">2086</span>
<span class="t" style="left:2612.98px;top:668.91px;font-size:37.97px;line-height:37.97px;color:#ffffff;font-family:'Liberation Mono',monospace;-webkit-text-stroke:0.7px #0299f6;transform:scaleX(0.8560);">2087</span>
<span class="t" style="left:2728.12px;top:668.91px;font-size:37.97px;line-height:37.97px;color:#ffffff;font-family:'Liberation Mono',monospace;-webkit-text-stroke:0.7px #0299f6;transform:scaleX(0.8560);">2121</span>
<span class="t" style="left:2843.69px;top:668.91px;font-size:37.97px;line-height:37.97px;color:#ffffff;font-family:'Liberation Mono',monospace;-webkit-text-stroke:0.7px #0299f6;transform:scaleX(0.8560);">2154</span>
<span class="t" style="left:2959.26px;top:668.91px;font-size:37.97px;line-height:37.97px;color:#ffffff;font-family:'Liberation Mono',monospace;-webkit-text-stroke:0.7px #0299f6;transform:scaleX(0.8560);">2181</span>
<span class="t" style="left:3074.83px;top:668.91px;font-size:37.97px;line-height:37.97px;color:#ffffff;font-family:'Liberation Mono',monospace;-webkit-text-stroke:0.7px #0299f6;transform:scaleX(0.8560);">2222</span>
<span class="t" style="left:3190.40px;top:668.91px;font-size:37.97px;line-height:37.97px;color:#ffffff;font-family:'Liberation Mono',monospace;-webkit-text-stroke:0.7px #0299f6;transform:scaleX(0.8560);">2323</span>
<span class="t" style="left:3305.97px;top:668.91px;font-size:37.97px;line-height:37.97px;color:#ffffff;font-family:'Liberation Mono',monospace;-webkit-text-stroke:0.7px #0299f6;transform:scaleX(0.8560);">2332</span>
<span class="t" style="left:3421.54px;top:668.91px;font-size:37.97px;line-height:37.97px;color:#ffffff;font-family:'Liberation Mono',monospace;-webkit-text-stroke:0.7px #0299f6;transform:scaleX(0.8560);">2345</span>
<span class="t" style="left:3537.11px;top:668.91px;font-size:37.97px;line-height:37.97px;color:#ffffff;font-family:'Liberation Mono',monospace;-webkit-text-stroke:0.7px #0299f6;transform:scaleX(0.8560);">2375</span>
<span class="t" style="left:2034.70px;top:790.01px;font-size:37.97px;line-height:37.97px;color:#ffffff;font-family:'Liberation Mono',monospace;-webkit-text-stroke:0.7px #0299f6;transform:scaleX(0.8560);">2379</span>
<span class="t" style="left:2150.27px;top:790.01px;font-size:37.97px;line-height:37.97px;color:#ffffff;font-family:'Liberation Mono',monospace;-webkit-text-stroke:0.7px #0299f6;transform:scaleX(0.8560);">2404</span>
<span class="t" style="left:2265.84px;top:790.01px;font-size:37.97px;line-height:37.97px;color:#ffffff;font-family:'Liberation Mono',monospace;-webkit-text-stroke:0.7px #0299f6;transform:scaleX(0.8560);">2455</span>
<span class="t" style="left:2381.41px;top:790.01px;font-size:37.97px;line-height:37.97px;color:#ffffff;font-family:'Liberation Mono',monospace;-webkit-text-stroke:0.7px #0299f6;transform:scaleX(0.8560);">2480</span>
<span class="t" style="left:2496.98px;top:790.01px;font-size:37.97px;line-height:37.97px;color:#ffffff;font-family:'Liberation Mono',monospace;-webkit-text-stroke:0.7px #0299f6;transform:scaleX(0.8560);">2554</span>
<span class="t" style="left:2612.55px;top:790.01px;font-size:37.97px;line-height:37.97px;color:#ffffff;font-family:'Liberation Mono',monospace;-webkit-text-stroke:0.7px #0299f6;transform:scaleX(0.8560);">2566</span>
<span class="t" style="left:2728.12px;top:790.01px;font-size:37.97px;line-height:37.97px;color:#ffffff;font-family:'Liberation Mono',monospace;-webkit-text-stroke:0.7px #0299f6;transform:scaleX(0.8560);">2628</span>
<span class="t" style="left:2843.69px;top:790.01px;font-size:37.97px;line-height:37.97px;color:#ffffff;font-family:'Liberation Mono',monospace;-webkit-text-stroke:0.7px #0299f6;transform:scaleX(0.8560);">2761</span>
<span class="t" style="left:2959.26px;top:790.01px;font-size:37.97px;line-height:37.97px;color:#ffffff;font-family:'Liberation Mono',monospace;-webkit-text-stroke:0.7px #0299f6;transform:scaleX(0.8560);">2762</span>
<span class="t" style="left:3074.83px;top:790.01px;font-size:37.97px;line-height:37.97px;color:#ffffff;font-family:'Liberation Mono',monospace;-webkit-text-stroke:0.7px #0299f6;transform:scaleX(0.8560);">3000</span>
<span class="t" style="left:3190.40px;top:790.01px;font-size:37.97px;line-height:37.97px;color:#ffffff;font-family:'Liberation Mono',monospace;-webkit-text-stroke:0.7px #0299f6;transform:scaleX(0.8560);">3001</span>
<span class="t" style="left:3305.97px;top:790.01px;font-size:37.97px;line-height:37.97px;color:#ffffff;font-family:'Liberation Mono',monospace;-webkit-text-stroke:0.7px #0299f6;transform:scaleX(0.8560);">3050</span>
<span class="t" style="left:3421.54px;top:790.01px;font-size:37.97px;line-height:37.97px;color:#ffffff;font-family:'Liberation Mono',monospace;-webkit-text-stroke:0.7px #0299f6;transform:scaleX(0.8560);">3108</span>
<span class="t" style="left:3537.11px;top:790.01px;font-size:37.97px;line-height:37.97px;color:#ffffff;font-family:'Liberation Mono',monospace;-webkit-text-stroke:0.7px #0299f6;transform:scaleX(0.8560);">3112</span>
<span class="t" style="left:2034.70px;top:911.11px;font-size:37.97px;line-height:37.97px;color:#ffffff;font-family:'Liberation Mono',monospace;-webkit-text-stroke:0.7px #0299f6;transform:scaleX(0.8560);">3128</span>
<span class="t" style="left:2150.27px;top:911.11px;font-size:37.97px;line-height:37.97px;color:#ffffff;font-family:'Liberation Mono',monospace;-webkit-text-stroke:0.7px #0299f6;transform:scaleX(0.8560);">3211</span>
<span class="t" style="left:2265.84px;top:911.11px;font-size:37.97px;line-height:37.97px;color:#ffffff;font-family:'Liberation Mono',monospace;-webkit-text-stroke:0.7px #0299f6;transform:scaleX(0.8560);">3260</span>
<span class="t" style="left:2381.41px;top:911.11px;font-size:37.97px;line-height:37.97px;color:#ffffff;font-family:'Liberation Mono',monospace;-webkit-text-stroke:0.7px #0299f6;transform:scaleX(0.8560);">3268</span>
<span class="t" style="left:2496.98px;top:911.11px;font-size:37.97px;line-height:37.97px;color:#ffffff;font-family:'Liberation Mono',monospace;-webkit-text-stroke:0.7px #0299f6;transform:scaleX(0.8560);">3269</span>
<span class="t" style="left:2612.55px;top:911.11px;font-size:37.97px;line-height:37.97px;color:#ffffff;font-family:'Liberation Mono',monospace;-webkit-text-stroke:0.7px #0299f6;transform:scaleX(0.8560);">3299</span>
<span class="t" style="left:2728.12px;top:911.11px;font-size:37.97px;line-height:37.97px;color:#ffffff;font-family:'Liberation Mono',monospace;-webkit-text-stroke:0.7px #0299f6;transform:scaleX(0.8560);">3301</span>
<span class="t" style="left:2843.69px;top:911.11px;font-size:37.97px;line-height:37.97px;color:#ffffff;font-family:'Liberation Mono',monospace;-webkit-text-stroke:0.7px #0299f6;transform:scaleX(0.8560);">3306</span>
<span class="t" style="left:2959.26px;top:911.11px;font-size:37.97px;line-height:37.97px;color:#ffffff;font-family:'Liberation Mono',monospace;-webkit-text-stroke:0.7px #0299f6;transform:scaleX(0.8560);">3310</span>
<span class="t" style="left:3074.83px;top:911.11px;font-size:37.97px;line-height:37.97px;color:#ffffff;font-family:'Liberation Mono',monospace;-webkit-text-stroke:0.7px #0299f6;transform:scaleX(0.8560);">3333</span>
<span class="t" style="left:3190.40px;top:911.11px;font-size:37.97px;line-height:37.97px;color:#ffffff;font-family:'Liberation Mono',monospace;-webkit-text-stroke:0.7px #0299f6;transform:scaleX(0.8560);">3388</span>
<span class="t" style="left:3305.97px;top:911.11px;font-size:37.97px;line-height:37.97px;color:#ffffff;font-family:'Liberation Mono',monospace;-webkit-text-stroke:0.7px #0299f6;transform:scaleX(0.8560);">3389</span>
<span class="t" style="left:3421.54px;top:911.11px;font-size:37.97px;line-height:37.97px;color:#ffffff;font-family:'Liberation Mono',monospace;-webkit-text-stroke:0.7px #0299f6;transform:scaleX(0.8560);">3404</span>
<span class="t" style="left:3537.11px;top:911.11px;font-size:37.97px;line-height:37.97px;color:#ffffff;font-family:'Liberation Mono',monospace;-webkit-text-stroke:0.7px #0299f6;transform:scaleX(0.8560);">3460</span>
<span class="t" style="left:2034.70px;top:1032.21px;font-size:37.97px;line-height:37.97px;color:#ffffff;font-family:'Liberation Mono',monospace;-webkit-text-stroke:0.7px #0299f6;transform:scaleX(0.8560);">3541</span>
<span class="t" style="left:2150.27px;top:1032.21px;font-size:37.97px;line-height:37.97px;color:#ffffff;font-family:'Liberation Mono',monospace;-webkit-text-stroke:0.7px #0299f6;transform:scaleX(0.8560);">3542</span>
<span class="t" style="left:2265.84px;top:1032.21px;font-size:37.97px;line-height:37.97px;color:#ffffff;font-family:'Liberation Mono',monospace;-webkit-text-stroke:0.7px #0299f6;transform:scaleX(0.8560);">3551</span>
<span class="t" style="left:2381.41px;top:1032.21px;font-size:37.97px;line-height:37.97px;color:#ffffff;font-family:'Liberation Mono',monospace;-webkit-text-stroke:0.7px #0299f6;transform:scaleX(0.8560);">3689</span>
<span class="t" style="left:2496.98px;top:1032.21px;font-size:37.97px;line-height:37.97px;color:#ffffff;font-family:'Liberation Mono',monospace;-webkit-text-stroke:0.7px #0299f6;transform:scaleX(0.8560);">3749</span>
<span class="t" style="left:2612.98px;top:1032.21px;font-size:37.97px;line-height:37.97px;color:#ffffff;font-family:'Liberation Mono',monospace;-webkit-text-stroke:0.7px #0299f6;transform:scaleX(0.8560);">4000</span>
<span class="t" style="left:2728.55px;top:1032.21px;font-size:37.97px;line-height:37.97px;color:#ffffff;font-family:'Liberation Mono',monospace;-webkit-text-stroke:0.7px #0299f6;transform:scaleX(0.8560);">4022</span>
<span class="t" style="left:2844.12px;top:1032.21px;font-size:37.97px;line-height:37.97px;color:#ffffff;font-family:'Liberation Mono',monospace;-webkit-text-stroke:0.7px #0299f6;transform:scaleX(0.8560);">4040</span>
<span class="t" style="left:2959.69px;top:1032.21px;font-size:37.97px;line-height:37.97px;color:#ffffff;font-family:'Liberation Mono',monospace;-webkit-text-stroke:0.7px #0299f6;transform:scaleX(0.8560);">4063</span>
<span class="t" style="left:3075.26px;top:1032.21px;font-size:37.97px;line-height:37.97px;color:#ffffff;font-family:'Liberation Mono',monospace;-webkit-text-stroke:0.7px #0299f6;transform:scaleX(0.8560);">4064</span>
<span class="t" style="left:3190.83px;top:1032.21px;font-size:37.97px;line-height:37.97px;color:#ffffff;font-family:'Liberation Mono',monospace;-webkit-text-stroke:0.7px #0299f6;transform:scaleX(0.8560);">4242</span>
<span class="t" style="left:3306.40px;top:1032.21px;font-size:37.97px;line-height:37.97px;color:#ffffff;font-family:'Liberation Mono',monospace;-webkit-text-stroke:0.7px #0299f6;transform:scaleX(0.8560);">4321</span>
<span class="t" style="left:3421.97px;top:1032.21px;font-size:37.97px;line-height:37.97px;color:#ffffff;font-family:'Liberation Mono',monospace;-webkit-text-stroke:0.7px #0299f6;transform:scaleX(0.8560);">4369</span>
<span class="t" style="left:3537.54px;top:1032.21px;font-size:37.97px;line-height:37.97px;color:#ffffff;font-family:'Liberation Mono',monospace;-webkit-text-stroke:0.7px #0299f6;transform:scaleX(0.8560);">4444</span>
<span class="t" style="left:2035.13px;top:1153.31px;font-size:37.97px;line-height:37.97px;color:#ffffff;font-family:'Liberation Mono',monospace;-webkit-text-stroke:0.7px #0299f6;transform:scaleX(0.8560);">4500</span>
<span class="t" style="left:2150.70px;top:1153.31px;font-size:37.97px;line-height:37.97px;color:#ffffff;font-family:'Liberation Mono',monospace;-webkit-text-stroke:0.7px #0299f6;transform:scaleX(0.8560);">4506</span>
<span class="t" style="left:2266.70px;top:1153.31px;font-size:37.97px;line-height:37.97px;color:#ffffff;font-family:'Liberation Mono',monospace;-webkit-text-stroke:0.7px #0299f6;transform:scaleX(0.8560);">4567</span>
<span class="t" style="left:2381.84px;top:1153.31px;font-size:37.97px;line-height:37.97px;color:#ffffff;font-family:'Liberation Mono',monospace;-webkit-text-stroke:0.7px #0299f6;transform:scaleX(0.8560);">4664</span>
<span class="t" style="left:2497.41px;top:1153.31px;font-size:37.97px;line-height:37.97px;color:#ffffff;font-family:'Liberation Mono',monospace;-webkit-text-stroke:0.7px #0299f6;transform:scaleX(0.8560);">4782</span>
<span class="t" style="left:2612.98px;top:1153.31px;font-size:37.97px;line-height:37.97px;color:#ffffff;font-family:'Liberation Mono',monospace;-webkit-text-stroke:0.7px #0299f6;transform:scaleX(0.8560);">4786</span>
<span class="t" style="left:2728.55px;top:1153.31px;font-size:37.97px;line-height:37.97px;color:#ffffff;font-family:'Liberation Mono',monospace;-webkit-text-stroke:0.7px #0299f6;transform:scaleX(0.8560);">4840</span>
<span class="t" style="left:2844.12px;top:1153.31px;font-size:37.97px;line-height:37.97px;color:#ffffff;font-family:'Liberation Mono',monospace;-webkit-text-stroke:0.7px #0299f6;transform:scaleX(0.8560);">4848</span>
<span class="t" style="left:2959.69px;top:1153.31px;font-size:37.97px;line-height:37.97px;color:#ffffff;font-family:'Liberation Mono',monospace;-webkit-text-stroke:0.7px #0299f6;transform:scaleX(0.8560);">4899</span>
<span class="t" style="left:3075.26px;top:1153.31px;font-size:37.97px;line-height:37.97px;color:#ffffff;font-family:'Liberation Mono',monospace;-webkit-text-stroke:0.7px #0299f6;transform:scaleX(0.8560);">4911</span>
<span class="t" style="left:3190.83px;top:1153.31px;font-size:37.97px;line-height:37.97px;color:#ffffff;font-family:'Liberation Mono',monospace;-webkit-text-stroke:0.7px #0299f6;transform:scaleX(0.8560);">4949</span>
<span class="t" style="left:3305.97px;top:1153.31px;font-size:37.97px;line-height:37.97px;color:#ffffff;font-family:'Liberation Mono',monospace;-webkit-text-stroke:0.7px #0299f6;transform:scaleX(0.8560);">5005</span>
<span class="t" style="left:3421.97px;top:1153.31px;font-size:37.97px;line-height:37.97px;color:#ffffff;font-family:'Liberation Mono',monospace;-webkit-text-stroke:0.7px #0299f6;transform:scaleX(0.8560);">5007</span>
<span class="t" style="left:3537.11px;top:1153.31px;font-size:37.97px;line-height:37.97px;color:#ffffff;font-family:'Liberation Mono',monospace;-webkit-text-stroke:0.7px #0299f6;transform:scaleX(0.8560);">5009</span>
<span class="t" style="left:2034.70px;top:1274.41px;font-size:37.97px;line-height:37.97px;color:#ffffff;font-family:'Liberation Mono',monospace;-webkit-text-stroke:0.7px #0299f6;transform:scaleX(0.8560);">5010</span>
<span class="t" style="left:2150.27px;top:1274.41px;font-size:37.97px;line-height:37.97px;color:#ffffff;font-family:'Liberation Mono',monospace;-webkit-text-stroke:0.7px #0299f6;transform:scaleX(0.8560);">5025</span>
<span class="t" style="left:2265.84px;top:1274.41px;font-size:37.97px;line-height:37.97px;color:#ffffff;font-family:'Liberation Mono',monospace;-webkit-text-stroke:0.7px #0299f6;transform:scaleX(0.8560);">5060</span>
<span class="t" style="left:2381.41px;top:1274.41px;font-size:37.97px;line-height:37.97px;color:#ffffff;font-family:'Liberation Mono',monospace;-webkit-text-stroke:0.7px #0299f6;transform:scaleX(0.8560);">5070</span>
<span class="t" style="left:2496.98px;top:1274.41px;font-size:37.97px;line-height:37.97px;color:#ffffff;font-family:'Liberation Mono',monospace;-webkit-text-stroke:0.7px #0299f6;transform:scaleX(0.8560);">5172</span>
<span class="t" style="left:2612.55px;top:1274.41px;font-size:37.97px;line-height:37.97px;color:#ffffff;font-family:'Liberation Mono',monospace;-webkit-text-stroke:0.7px #0299f6;transform:scaleX(0.8560);">5201</span>
<span class="t" style="left:2728.12px;top:1274.41px;font-size:37.97px;line-height:37.97px;color:#ffffff;font-family:'Liberation Mono',monospace;-webkit-text-stroke:0.7px #0299f6;transform:scaleX(0.8560);">5222</span>
<span class="t" style="left:2843.69px;top:1274.41px;font-size:37.97px;line-height:37.97px;color:#ffffff;font-family:'Liberation Mono',monospace;-webkit-text-stroke:0.7px #0299f6;transform:scaleX(0.8560);">5269</span>
<span class="t" style="left:2959.69px;top:1274.41px;font-size:37.97px;line-height:37.97px;color:#ffffff;font-family:'Liberation Mono',monospace;-webkit-text-stroke:0.7px #0299f6;transform:scaleX(0.8560);">5357</span>
<span class="t" style="left:3074.83px;top:1274.41px;font-size:37.97px;line-height:37.97px;color:#ffffff;font-family:'Liberation Mono',monospace;-webkit-text-stroke:0.7px #0299f6;transform:scaleX(0.8560);">5432</span>
<span class="t" style="left:3190.40px;top:1274.41px;font-size:37.97px;line-height:37.97px;color:#ffffff;font-family:'Liberation Mono',monospace;-webkit-text-stroke:0.7px #0299f6;transform:scaleX(0.8560);">5435</span>
<span class="t" style="left:3305.97px;top:1274.41px;font-size:37.97px;line-height:37.97px;color:#ffffff;font-family:'Liberation Mono',monospace;-webkit-text-stroke:0.7px #0299f6;transform:scaleX(0.8560);">5560</span>
<span class="t" style="left:3421.54px;top:1274.41px;font-size:37.97px;line-height:37.97px;color:#ffffff;font-family:'Liberation Mono',monospace;-webkit-text-stroke:0.7px #0299f6;transform:scaleX(0.8560);">5601</span>
<span class="t" style="left:3537.11px;top:1274.41px;font-size:37.97px;line-height:37.97px;color:#ffffff;font-family:'Liberation Mono',monospace;-webkit-text-stroke:0.7px #0299f6;transform:scaleX(0.8560);">5603</span>
<span class="t" style="left:2034.70px;top:1395.51px;font-size:37.97px;line-height:37.97px;color:#ffffff;font-family:'Liberation Mono',monospace;-webkit-text-stroke:0.7px #0299f6;transform:scaleX(0.8560);">5672</span>
<span class="t" style="left:2150.27px;top:1395.51px;font-size:37.97px;line-height:37.97px;color:#ffffff;font-family:'Liberation Mono',monospace;-webkit-text-stroke:0.7px #0299f6;transform:scaleX(0.8560);">5800</span>
<span class="t" style="left:2265.84px;top:1395.51px;font-size:37.97px;line-height:37.97px;color:#ffffff;font-family:'Liberation Mono',monospace;-webkit-text-stroke:0.7px #0299f6;transform:scaleX(0.8560);">5801</span>
<span class="t" style="left:2381.41px;top:1395.51px;font-size:37.97px;line-height:37.97px;color:#ffffff;font-family:'Liberation Mono',monospace;-webkit-text-stroke:0.7px #0299f6;transform:scaleX(0.8560);">5858</span>
<span class="t" style="left:2496.98px;top:1395.51px;font-size:37.97px;line-height:37.97px;color:#ffffff;font-family:'Liberation Mono',monospace;-webkit-text-stroke:0.7px #0299f6;transform:scaleX(0.8560);">5900</span>
<span class="t" style="left:2612.55px;top:1395.51px;font-size:37.97px;line-height:37.97px;color:#ffffff;font-family:'Liberation Mono',monospace;-webkit-text-stroke:0.7px #0299f6;transform:scaleX(0.8560);">5901</span>
<span class="t" style="left:2728.12px;top:1395.51px;font-size:37.97px;line-height:37.97px;color:#ffffff;font-family:'Liberation Mono',monospace;-webkit-text-stroke:0.7px #0299f6;transform:scaleX(0.8560);">5909</span>
<span class="t" style="left:2843.69px;top:1395.51px;font-size:37.97px;line-height:37.97px;color:#ffffff;font-family:'Liberation Mono',monospace;-webkit-text-stroke:0.7px #0299f6;transform:scaleX(0.8560);">5938</span>
<span class="t" style="left:2959.26px;top:1395.51px;font-size:37.97px;line-height:37.97px;color:#ffffff;font-family:'Liberation Mono',monospace;-webkit-text-stroke:0.7px #0299f6;transform:scaleX(0.8560);">5984</span>
<span class="t" style="left:3074.83px;top:1395.51px;font-size:37.97px;line-height:37.97px;color:#ffffff;font-family:'Liberation Mono',monospace;-webkit-text-stroke:0.7px #0299f6;transform:scaleX(0.8560);">5985</span>
<span class="t" style="left:3190.40px;top:1395.51px;font-size:37.97px;line-height:37.97px;color:#ffffff;font-family:'Liberation Mono',monospace;-webkit-text-stroke:0.7px #0299f6;transform:scaleX(0.8560);">6000</span>
<span class="t" style="left:3305.97px;top:1395.51px;font-size:37.97px;line-height:37.97px;color:#ffffff;font-family:'Liberation Mono',monospace;-webkit-text-stroke:0.7px #0299f6;transform:scaleX(0.8560);">6001</span>
<span class="t" style="left:3421.54px;top:1395.51px;font-size:37.97px;line-height:37.97px;color:#ffffff;font-family:'Liberation Mono',monospace;-webkit-text-stroke:0.7px #0299f6;transform:scaleX(0.8560);">6002</span>
<span class="t" style="left:3537.11px;top:1395.51px;font-size:37.97px;line-height:37.97px;color:#ffffff;font-family:'Liberation Mono',monospace;-webkit-text-stroke:0.7px #0299f6;transform:scaleX(0.8560);">6080</span>
<span class="t" style="left:2034.70px;top:1516.61px;font-size:37.97px;line-height:37.97px;color:#ffffff;font-family:'Liberation Mono',monospace;-webkit-text-stroke:0.7px #0299f6;transform:scaleX(0.8560);">6379</span>
<span class="t" style="left:2150.27px;top:1516.61px;font-size:37.97px;line-height:37.97px;color:#ffffff;font-family:'Liberation Mono',monospace;-webkit-text-stroke:0.7px #0299f6;transform:scaleX(0.8560);">6633</span>
<span class="t" style="left:2265.84px;top:1516.61px;font-size:37.97px;line-height:37.97px;color:#ffffff;font-family:'Liberation Mono',monospace;-webkit-text-stroke:0.7px #0299f6;transform:scaleX(0.8560);">6653</span>
<span class="t" style="left:2381.41px;top:1516.61px;font-size:37.97px;line-height:37.97px;color:#ffffff;font-family:'Liberation Mono',monospace;-webkit-text-stroke:0.7px #0299f6;transform:scaleX(0.8560);">6664</span>
<span class="t" style="left:2496.98px;top:1516.61px;font-size:37.97px;line-height:37.97px;color:#ffffff;font-family:'Liberation Mono',monospace;-webkit-text-stroke:0.7px #0299f6;transform:scaleX(0.8560);">6666</span>
<span class="t" style="left:2612.98px;top:1516.61px;font-size:37.97px;line-height:37.97px;color:#ffffff;font-family:'Liberation Mono',monospace;-webkit-text-stroke:0.7px #0299f6;transform:scaleX(0.8560);">6667</span>
<span class="t" style="left:2728.12px;top:1516.61px;font-size:37.97px;line-height:37.97px;color:#ffffff;font-family:'Liberation Mono',monospace;-webkit-text-stroke:0.7px #0299f6;transform:scaleX(0.8560);">6668</span>
<span class="t" style="left:2844.12px;top:1516.61px;font-size:37.97px;line-height:37.97px;color:#ffffff;font-family:'Liberation Mono',monospace;-webkit-text-stroke:0.7px #0299f6;transform:scaleX(0.8560);">6697</span>
<span class="t" style="left:2959.26px;top:1516.61px;font-size:37.97px;line-height:37.97px;color:#ffffff;font-family:'Liberation Mono',monospace;-webkit-text-stroke:0.7px #0299f6;transform:scaleX(0.8560);">7171</span>
<span class="t" style="left:3074.83px;top:1516.61px;font-size:37.97px;line-height:37.97px;color:#ffffff;font-family:'Liberation Mono',monospace;-webkit-text-stroke:0.7px #0299f6;transform:scaleX(0.8560);">7218</span>
<span class="t" style="left:3190.40px;top:1516.61px;font-size:37.97px;line-height:37.97px;color:#ffffff;font-family:'Liberation Mono',monospace;-webkit-text-stroke:0.7px #0299f6;transform:scaleX(0.8560);">7474</span>
<span class="t" style="left:3306.40px;top:1516.61px;font-size:37.97px;line-height:37.97px;color:#ffffff;font-family:'Liberation Mono',monospace;-webkit-text-stroke:0.7px #0299f6;transform:scaleX(0.8560);">7547</span>
<span class="t" style="left:3421.97px;top:1516.61px;font-size:37.97px;line-height:37.97px;color:#ffffff;font-family:'Liberation Mono',monospace;-webkit-text-stroke:0.7px #0299f6;transform:scaleX(0.8560);">7657</span>
<span class="t" style="left:3537.54px;top:1516.61px;font-size:37.97px;line-height:37.97px;color:#ffffff;font-family:'Liberation Mono',monospace;-webkit-text-stroke:0.7px #0299f6;transform:scaleX(0.8560);">7777</span>
<span class="t" style="left:2034.70px;top:1637.71px;font-size:37.97px;line-height:37.97px;color:#ffffff;font-family:'Liberation Mono',monospace;-webkit-text-stroke:0.7px #0299f6;transform:scaleX(0.8560);">7779</span>
<span class="t" style="left:2150.27px;top:1637.71px;font-size:37.97px;line-height:37.97px;color:#ffffff;font-family:'Liberation Mono',monospace;-webkit-text-stroke:0.7px #0299f6;transform:scaleX(0.8560);">7989</span>
<span class="t" style="left:2265.84px;top:1637.71px;font-size:37.97px;line-height:37.97px;color:#ffffff;font-family:'Liberation Mono',monospace;-webkit-text-stroke:0.7px #0299f6;transform:scaleX(0.8560);">8000</span>
<span class="t" style="left:2381.41px;top:1637.71px;font-size:37.97px;line-height:37.97px;color:#ffffff;font-family:'Liberation Mono',monospace;-webkit-text-stroke:0.7px #0299f6;transform:scaleX(0.8560);">8001</span>
<span class="t" style="left:2496.98px;top:1637.71px;font-size:37.97px;line-height:37.97px;color:#ffffff;font-family:'Liberation Mono',monospace;-webkit-text-stroke:0.7px #0299f6;transform:scaleX(0.8560);">8008</span>
<span class="t" style="left:2612.55px;top:1637.71px;font-size:37.97px;line-height:37.97px;color:#ffffff;font-family:'Liberation Mono',monospace;-webkit-text-stroke:0.7px #0299f6;transform:scaleX(0.8560);">8009</span>
<span class="t" style="left:2728.12px;top:1637.71px;font-size:37.97px;line-height:37.97px;color:#ffffff;font-family:'Liberation Mono',monospace;-webkit-text-stroke:0.7px #0299f6;transform:scaleX(0.8560);">8010</span>
<span class="t" style="left:2843.69px;top:1637.71px;font-size:37.97px;line-height:37.97px;color:#ffffff;font-family:'Liberation Mono',monospace;-webkit-text-stroke:0.7px #0299f6;transform:scaleX(0.8560);">8022</span>
<span class="t" style="left:2959.26px;top:1637.71px;font-size:37.97px;line-height:37.97px;color:#ffffff;font-family:'Liberation Mono',monospace;-webkit-text-stroke:0.7px #0299f6;transform:scaleX(0.8560);">8031</span>
<span class="t" style="left:3074.83px;top:1637.71px;font-size:37.97px;line-height:37.97px;color:#ffffff;font-family:'Liberation Mono',monospace;-webkit-text-stroke:0.7px #0299f6;transform:scaleX(0.8560);">8060</span>
<span class="t" style="left:3190.40px;top:1637.71px;font-size:37.97px;line-height:37.97px;color:#ffffff;font-family:'Liberation Mono',monospace;-webkit-text-stroke:0.7px #0299f6;transform:scaleX(0.8560);">8069</span>
<span class="t" style="left:3305.97px;top:1637.71px;font-size:37.97px;line-height:37.97px;color:#ffffff;font-family:'Liberation Mono',monospace;-webkit-text-stroke:0.7px #0299f6;transform:scaleX(0.8560);">8080</span>
<span class="t" style="left:3421.54px;top:1637.71px;font-size:37.97px;line-height:37.97px;color:#ffffff;font-family:'Liberation Mono',monospace;-webkit-text-stroke:0.7px #0299f6;transform:scaleX(0.8560);">8086</span>
<span class="t" style="left:3537.54px;top:1637.71px;font-size:37.97px;line-height:37.97px;color:#ffffff;font-family:'Liberation Mono',monospace;-webkit-text-stroke:0.7px #0299f6;transform:scaleX(0.8560);">8087</span>
</div></div><div id="fr"></div></body></html>
